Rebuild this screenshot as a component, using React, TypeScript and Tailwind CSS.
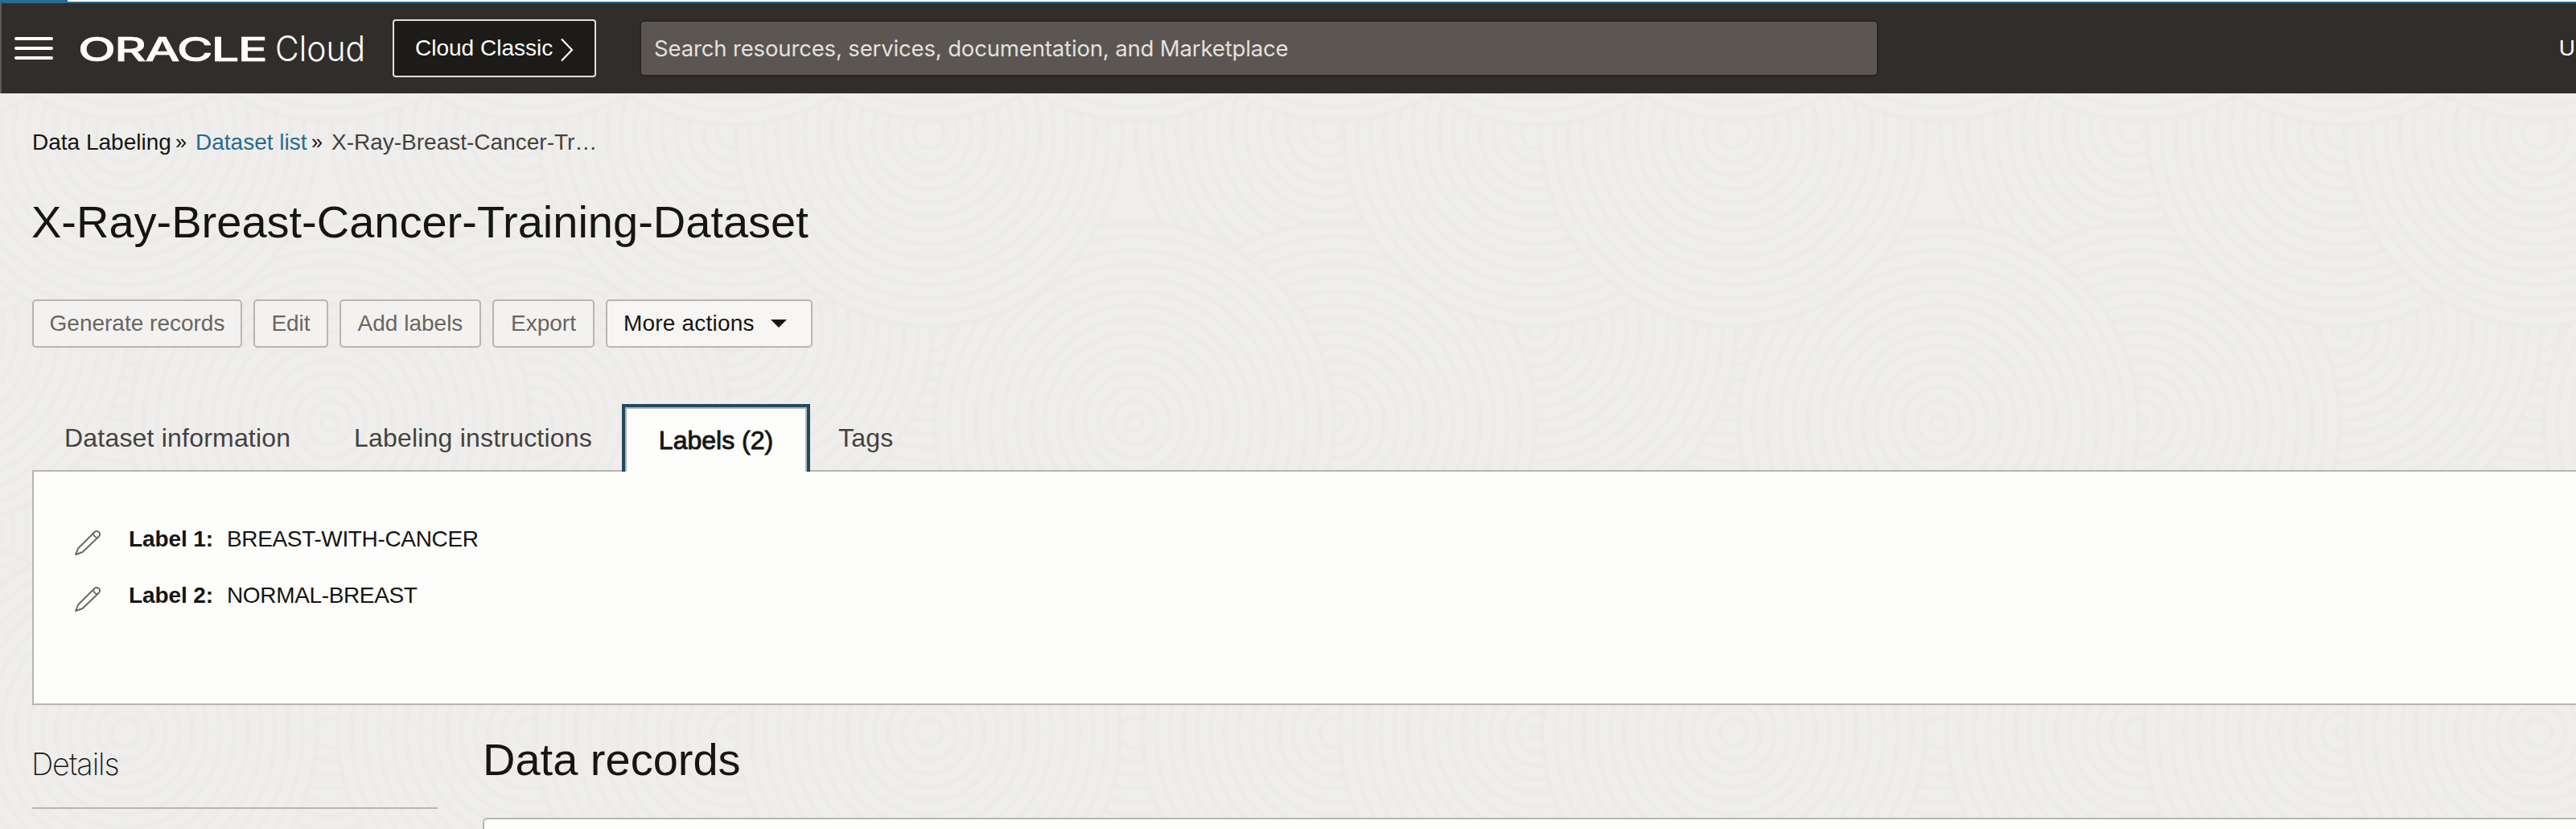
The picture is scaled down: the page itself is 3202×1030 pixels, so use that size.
import React from "react";

type Disk = [number, number, number];

const TILE = 1000;

// Painted in order: later disks cover earlier ones.
const DISKS: Disk[] = [
  [660, 782, 245],
  [410, 782, 245],
  [155, 660, 245],
  [910, 660, 245],
  [155, 410, 250],
  [910, 410, 250],
  [650, 160, 240],
  [660, 525, 250],
  [410, 525, 250],
  [910, 165, 242],
  [155, 165, 242],
  [410, 910, 242],
  [660, 910, 242],
  [910, 910, 247],
  [155, 910, 240],
];

function RippleDisk({ cx, cy, r }: { cx: number; cy: number; r: number }) {
  const rings: number[] = [];
  for (let k = r - 2; k > 4; k -= 17) rings.push(k);
  return (
    <g>
      <circle cx={cx} cy={cy} r={r} fill="#efeeec" />
      {rings.map((k) => (
        <circle key={k} cx={cx} cy={cy} r={k} fill="none" stroke="#ebeae8" strokeWidth={5} />
      ))}
    </g>
  );
}

function RippleBackground() {
  return (
    <svg className="absolute inset-0 -z-10 h-full w-full" aria-hidden="true">
      <defs>
        <filter id="soften" x="0" y="0" width="100%" height="100%">
          <feGaussianBlur stdDeviation="1.6" />
        </filter>
        <pattern id="ripples" width={TILE} height={TILE} patternUnits="userSpaceOnUse">
          <rect width={TILE} height={TILE} fill="#efeeec" />
          {DISKS.flatMap(([x, y, r]) =>
            [-TILE, 0, TILE].flatMap((dx) =>
              [-TILE, 0, TILE]
                .filter(
                  (dy) =>
                    x + dx + r > 0 && x + dx - r < TILE && y + dy + r > 0 && y + dy - r < TILE,
                )
                .map((dy) => (
                  <RippleDisk key={`${x}-${y}-${dx}-${dy}`} cx={x + dx} cy={y + dy} r={r} />
                )),
            ),
          )}
        </pattern>
      </defs>
      <rect width="100%" height="100%" fill="url(#ripples)" filter="url(#soften)" />
    </svg>
  );
}

function OracleLogo() {
  return (
    <svg
      className="ml-[24px] h-[80px] w-[368px] shrink-0 overflow-visible"
      viewBox="90 20 368 80"
      aria-label="Oracle Cloud"
    >
      <text
        x="97"
        y="76"
        textLength="234"
        lengthAdjust="spacingAndGlyphs"
        fill="#fff"
        stroke="#fff"
        strokeWidth="0.6"
        fontFamily="Inter, sans-serif"
        fontWeight="500"
        fontSize="41.5"
        letterSpacing="-1.2"
      >
        ORACLE
      </text>
      <text
        x="342"
        y="76"
        textLength="112"
        lengthAdjust="spacingAndGlyphs"
        fill="#fff"
        fontFamily="Inter, sans-serif"
        fontWeight="300"
        fontSize="43"
      >
        Cloud
      </text>
    </svg>
  );
}

function Header() {
  return (
    <header className="relative flex h-[112px] shrink-0 items-center bg-[#312d2a] pl-[18px] text-white">
      <div className="absolute left-0 top-0 h-full w-[2px] bg-[#5c5957]" />
      <button className="flex w-[48px] shrink-0 flex-col gap-[8px]" aria-label="Menu">
        <span className="h-[4px] rounded-[2px] bg-white" />
        <span className="h-[4px] rounded-[2px] bg-white" />
        <span className="h-[4px] rounded-[2px] bg-white" />
      </button>
      <OracleLogo />
      <button className="ml-[30px] flex h-[72px] w-[253px] shrink-0 items-center rounded-[4px] border-2 border-[#e2e0dd] bg-[#1c1b17] pl-[26px] text-[28px]">
        <span className="w-[180px] whitespace-nowrap text-left">Cloud Classic</span>
        <svg className="mt-[4px] h-[30px] w-[18px]" viewBox="0 0 18 30" fill="none" stroke="#fff" strokeWidth="2.2">
          <path d="M2 1.500 15 15 2 28.500" />
        </svg>
      </button>
      <div className="ml-[54px] flex h-[70px] w-[1540px] items-center rounded-[6px] border-2 border-[#292522] bg-[#5b5652] pl-[16px]">
        <span className="whitespace-nowrap pt-[2px] font-['Inter'] text-[27.5px] tracking-[-0.15px] text-[#e3e1dd]">
          Search resources, services, documentation, and Marketplace
        </span>
      </div>
      <span className="ml-auto mr-px text-[28px]">U</span>
    </header>
  );
}

function Breadcrumb() {
  return (
    <nav className="flex h-[34px] shrink-0 items-center whitespace-nowrap text-[28px] text-[#161513]">
      <span className="w-[178px]">Data Labeling</span>
      <span className="w-[25px] text-[25px]">»</span>
      <a className="w-[144px] text-[#2b6a8d]">Dataset list</a>
      <span className="w-[25px] text-[25px]">»</span>
      <span className="text-[#44423f]">X-Ray-Breast-Cancer-Tr…</span>
    </nav>
  );
}

function Toolbar() {
  const base =
    "flex h-[60px] items-center whitespace-nowrap rounded-[5px] border-2 border-[#bcb4ae] text-[28px]";
  const muted = "justify-center bg-[#f3f2f0] text-[#6b6560]";
  return (
    <div className="flex gap-[14px]">
      <button className={`${base} ${muted} w-[261px]`}>Generate records</button>
      <button className={`${base} ${muted} w-[93px]`}>Edit</button>
      <button className={`${base} ${muted} w-[176px]`}>Add labels</button>
      <button className={`${base} ${muted} w-[127px]`}>Export</button>
      <button className={`${base} w-[257px] gap-[20px] bg-[#f7f6f4] pl-[20px] text-[#161513]`}>
        <span className="tracking-[0.2px]">More actions</span>
        <svg className="h-[10px] w-[20px]" viewBox="0 0 20 10" fill="#161513">
          <path d="M0 0H20L10 10Z" />
        </svg>
      </button>
    </div>
  );
}

function Tabs() {
  const tab = "whitespace-nowrap pt-[25px] text-[32px] leading-[34px] tracking-[0.2px] text-[#44423f]";
  return (
    <div className="relative z-10 -mb-[2px] flex h-[84px] pl-[40px]">
      <span className={`${tab} w-[360px]`}>Dataset information</span>
      <span className={`${tab} w-[333px]`}>Labeling instructions</span>
      <div className="h-[84px] w-[234px] border-x-4 border-t-4 border-[#204a61]">
        <div className="h-[80px] whitespace-nowrap border-x-2 border-t-2 border-[#bcb4ae] bg-[#fdfdfb] pt-[22px] text-center text-[32px] leading-[34px] text-[#161513] [-webkit-text-stroke:0.9px_#161513]">
          Labels (2)
        </div>
      </div>
      <span className={`${tab} pl-[35px]`}>Tags</span>
    </div>
  );
}

function Pencil() {
  return (
    <svg
      className="mt-[8px] h-[34px] w-[34px] shrink-0"
      viewBox="0 0 34 34"
      fill="none"
      stroke="#6b6560"
      strokeWidth="1.9"
      strokeLinejoin="round"
    >
      <path d="M2 32 5 24.500 25.500 4Q28.500 1.700 31 4.200 33.200 7 31 9.500L10.500 29Z" />
      <path d="M23.800 6Q26 11.500 29.500 11" />
    </svg>
  );
}

function LabelRow({ name, value }: { name: string; value: string }) {
  return (
    <div className="flex h-[70px] items-center whitespace-nowrap text-[28px] text-[#161513]">
      <Pencil />
      <span className="ml-[34px] w-[122px] font-bold tracking-[-0.1px]">{name}</span>
      <span className="tracking-[-0.35px]">{value}</span>
    </div>
  );
}

export default function App() {
  return (
    <div className="relative isolate flex h-[1030px] w-[3202px] flex-col overflow-hidden bg-[#efeeec] font-['Liberation_Sans',Arial,sans-serif]">
      <RippleBackground />
      <div className="h-[4px] shrink-0 border-b-2 border-[#2b6a8d] bg-white">
        <div className="h-[2px] w-[84px] bg-[#2b6a8d]" />
      </div>
      <Header />
      <main className="flex flex-1 flex-col pl-[40px] pt-[44px]">
        <Breadcrumb />
        <h1 className="-ml-px mt-[50px] h-[64px] shrink-0 whitespace-nowrap text-[56px] leading-[64px] text-[#161513]">
          X-Ray-Breast-Cancer-Training-Dataset
        </h1>
        <div className="mt-[64px] shrink-0">
          <Toolbar />
        </div>
        <div className="mt-[70px] shrink-0">
          <Tabs />
        </div>
        <section className="h-[292px] shrink-0 border-2 border-r-0 border-[#bab4ae] bg-[#fdfdfb] pl-[50px] pt-[49px]">
          <LabelRow name="Label 1:" value="BREAST-WITH-CANCER" />
          <LabelRow name="Label 2:" value="NORMAL-BREAST" />
        </section>
        <div className="flex items-start gap-[56px]">
          <aside className="h-[129px] w-[504px] border-b-2 border-[#bcb4ae] pt-[48px]">
            <h2 className="-ml-[1px] font-['Inter'] text-[38px] font-extralight leading-[50px] tracking-[-1.1px] text-[#161513]">
              Details
            </h2>
          </aside>
          <section className="flex-1">
            <h2 className="mt-[36px] h-[64px] text-[56px] leading-[64px] text-[#161513]">Data records</h2>
            <div className="mt-[40px] h-[40px] rounded-tl-[6px] border-l-2 border-t-2 border-[#bab4ae] bg-[#fdfdfb]" />
          </section>
        </div>
      </main>
    </div>
  );
}
